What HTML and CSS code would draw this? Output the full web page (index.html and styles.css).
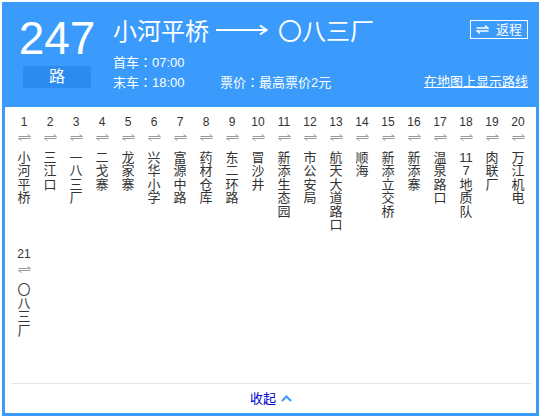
FILE: index.html
```html
<!DOCTYPE html>
<html>
<head>
<meta charset="utf-8">
<link rel="stylesheet" href="styles.css">
</head>
<body>
<div class="card">
  <div class="header">
    <div class="line-no">
      <div class="num">247</div>
      <div class="lu">路</div>
    </div>
    <div class="info">
      <div class="title-row">
        <div class="title">
          <span>小河平桥</span>
          <svg class="long-arrow" width="52" height="12" viewBox="0 0 52 12"><path d="M0 6H50M44 1.5L50.5 6L44 10.5" fill="none" stroke="#fff" stroke-width="2"/></svg>
          <span>〇八三厂</span>
        </div>
        <div class="return"><svg class="ret-icon" width="13" height="9" viewBox="0 0 13 9"><path d="M0.5 3H12L9 0.5M12.5 6H1L4 8.5" fill="none" stroke="#fff" stroke-width="1.3"/></svg><span>返程</span></div>
      </div>
      <div class="time">首车<span class="colon">：</span>07:00</div>
      <div class="time-row">
        <span class="t-last">末车<span class="colon">：</span>18:00</span>
        <span>票价<span class="colon">：</span>最高票价2元</span>
        <a class="maplink">在地图上显示路线</a>
      </div>
    </div>
  </div>
  <div class="stations">
    <div class="st"><div class="no">1</div><svg class="sw" width="13" height="7" viewBox="0 0 13 7"><path d="M0.5 2.5H12.5L9.5 0.5M12.5 4.5H0.5L3.5 6.5" fill="none" stroke="#999" stroke-width="1"/></svg><div class="name">小河平桥</div></div>
    <div class="st"><div class="no">2</div><svg class="sw" width="13" height="7" viewBox="0 0 13 7"><path d="M0.5 2.5H12.5L9.5 0.5M12.5 4.5H0.5L3.5 6.5" fill="none" stroke="#999" stroke-width="1"/></svg><div class="name">三江口</div></div>
    <div class="st"><div class="no">3</div><svg class="sw" width="13" height="7" viewBox="0 0 13 7"><path d="M0.5 2.5H12.5L9.5 0.5M12.5 4.5H0.5L3.5 6.5" fill="none" stroke="#999" stroke-width="1"/></svg><div class="name">一八三厂</div></div>
    <div class="st"><div class="no">4</div><svg class="sw" width="13" height="7" viewBox="0 0 13 7"><path d="M0.5 2.5H12.5L9.5 0.5M12.5 4.5H0.5L3.5 6.5" fill="none" stroke="#999" stroke-width="1"/></svg><div class="name">二戈寨</div></div>
    <div class="st"><div class="no">5</div><svg class="sw" width="13" height="7" viewBox="0 0 13 7"><path d="M0.5 2.5H12.5L9.5 0.5M12.5 4.5H0.5L3.5 6.5" fill="none" stroke="#999" stroke-width="1"/></svg><div class="name">龙家寨</div></div>
    <div class="st"><div class="no">6</div><svg class="sw" width="13" height="7" viewBox="0 0 13 7"><path d="M0.5 2.5H12.5L9.5 0.5M12.5 4.5H0.5L3.5 6.5" fill="none" stroke="#999" stroke-width="1"/></svg><div class="name">兴华小学</div></div>
    <div class="st"><div class="no">7</div><svg class="sw" width="13" height="7" viewBox="0 0 13 7"><path d="M0.5 2.5H12.5L9.5 0.5M12.5 4.5H0.5L3.5 6.5" fill="none" stroke="#999" stroke-width="1"/></svg><div class="name">富源中路</div></div>
    <div class="st"><div class="no">8</div><svg class="sw" width="13" height="7" viewBox="0 0 13 7"><path d="M0.5 2.5H12.5L9.5 0.5M12.5 4.5H0.5L3.5 6.5" fill="none" stroke="#999" stroke-width="1"/></svg><div class="name">药材仓库</div></div>
    <div class="st"><div class="no">9</div><svg class="sw" width="13" height="7" viewBox="0 0 13 7"><path d="M0.5 2.5H12.5L9.5 0.5M12.5 4.5H0.5L3.5 6.5" fill="none" stroke="#999" stroke-width="1"/></svg><div class="name">东二环路</div></div>
    <div class="st"><div class="no">10</div><svg class="sw" width="13" height="7" viewBox="0 0 13 7"><path d="M0.5 2.5H12.5L9.5 0.5M12.5 4.5H0.5L3.5 6.5" fill="none" stroke="#999" stroke-width="1"/></svg><div class="name">冒沙井</div></div>
    <div class="st"><div class="no">11</div><svg class="sw" width="13" height="7" viewBox="0 0 13 7"><path d="M0.5 2.5H12.5L9.5 0.5M12.5 4.5H0.5L3.5 6.5" fill="none" stroke="#999" stroke-width="1"/></svg><div class="name">新添生态园</div></div>
    <div class="st"><div class="no">12</div><svg class="sw" width="13" height="7" viewBox="0 0 13 7"><path d="M0.5 2.5H12.5L9.5 0.5M12.5 4.5H0.5L3.5 6.5" fill="none" stroke="#999" stroke-width="1"/></svg><div class="name">市公安局</div></div>
    <div class="st"><div class="no">13</div><svg class="sw" width="13" height="7" viewBox="0 0 13 7"><path d="M0.5 2.5H12.5L9.5 0.5M12.5 4.5H0.5L3.5 6.5" fill="none" stroke="#999" stroke-width="1"/></svg><div class="name">航天大道路口</div></div>
    <div class="st"><div class="no">14</div><svg class="sw" width="13" height="7" viewBox="0 0 13 7"><path d="M0.5 2.5H12.5L9.5 0.5M12.5 4.5H0.5L3.5 6.5" fill="none" stroke="#999" stroke-width="1"/></svg><div class="name">顺海</div></div>
    <div class="st"><div class="no">15</div><svg class="sw" width="13" height="7" viewBox="0 0 13 7"><path d="M0.5 2.5H12.5L9.5 0.5M12.5 4.5H0.5L3.5 6.5" fill="none" stroke="#999" stroke-width="1"/></svg><div class="name">新添立交桥</div></div>
    <div class="st"><div class="no">16</div><svg class="sw" width="13" height="7" viewBox="0 0 13 7"><path d="M0.5 2.5H12.5L9.5 0.5M12.5 4.5H0.5L3.5 6.5" fill="none" stroke="#999" stroke-width="1"/></svg><div class="name">新添寨</div></div>
    <div class="st"><div class="no">17</div><svg class="sw" width="13" height="7" viewBox="0 0 13 7"><path d="M0.5 2.5H12.5L9.5 0.5M12.5 4.5H0.5L3.5 6.5" fill="none" stroke="#999" stroke-width="1"/></svg><div class="name">温泉路口</div></div>
    <div class="st"><div class="no">18</div><svg class="sw" width="13" height="7" viewBox="0 0 13 7"><path d="M0.5 2.5H12.5L9.5 0.5M12.5 4.5H0.5L3.5 6.5" fill="none" stroke="#999" stroke-width="1"/></svg><div class="name">117地质队</div></div>
    <div class="st"><div class="no">19</div><svg class="sw" width="13" height="7" viewBox="0 0 13 7"><path d="M0.5 2.5H12.5L9.5 0.5M12.5 4.5H0.5L3.5 6.5" fill="none" stroke="#999" stroke-width="1"/></svg><div class="name">肉联厂</div></div>
    <div class="st"><div class="no">20</div><svg class="sw" width="13" height="7" viewBox="0 0 13 7"><path d="M0.5 2.5H12.5L9.5 0.5M12.5 4.5H0.5L3.5 6.5" fill="none" stroke="#999" stroke-width="1"/></svg><div class="name">万江机电</div></div>
    <div class="st"><div class="no">21</div><svg class="sw" width="13" height="7" viewBox="0 0 13 7"><path d="M0.5 2.5H12.5L9.5 0.5M12.5 4.5H0.5L3.5 6.5" fill="none" stroke="#999" stroke-width="1"/></svg><div class="name">〇八三厂</div></div>
  </div>
  <div class="footer">
    <span class="fold">收起</span>
    <svg class="chev" width="11" height="7" viewBox="0 0 11 7"><path d="M1 6L5.5 1.5L10 6" fill="none" stroke="#3a9bfc" stroke-width="2"/></svg>
  </div>
</div>
</body>
</html>
```
FILE: styles.css
```css
* { box-sizing: border-box; }
html, body { margin: 0; padding: 0; background: #fff; }
body {
  padding: 2px;
  font-family: "Liberation Sans", "Noto Sans CJK SC", sans-serif;
}
.card {
  width: 537px;
  height: 414px;
  border: 3px solid #3a9bfc;
  border-top: 0;
  display: flex;
  flex-direction: column;
}
.header {
  height: 105px;
  background: #3a9bfc;
  color: #fff;
  display: flex;
  align-items: flex-start;
  padding-left: 18px;
}
.line-no {
  width: 68px;
  padding-top: 13px;
  display: flex;
  flex-direction: column;
  align-items: center;
}
.num {
  font-size: 46px;
  line-height: 46px;
  height: 46px;
}
.lu {
  margin-top: 5px;
  width: 68px;
  height: 22px;
  background: #2b8bef;
  font-size: 16px;
  line-height: 22px;
  text-align: center;
}
.info {
  flex: 1;
  margin-left: 22px;
  padding-right: 8px;
  padding-top: 16px;
  font-size: 13px;
}
.title-row {
  display: flex;
  justify-content: space-between;
  align-items: flex-start;
  height: 34px;
}
.title {
  display: flex;
  align-items: center;
  font-size: 24px;
  line-height: 28px;
  height: 28px;
}
.long-arrow {
  display: block;
  margin: 0 10px 4px 7px;
}
.return {
  margin-top: 2px;
  width: 58px;
  height: 19px;
  border: 1px solid #fff;
  display: flex;
  align-items: center;
  padding-left: 5px;
  font-size: 13px;
  line-height: 17px;
}
.ret-icon { display: block; margin-right: 7px; }
.time, .time-row {
  line-height: 20px;
  height: 20px;
}
.colon { font-family: "Noto Sans CJK TC", sans-serif; }
.time-row { display: flex; }
.t-last { width: 107px; }
.maplink {
  margin-left: auto;
  color: #fff;
  text-decoration: underline;
}
.stations {
  flex: 1;
  display: flex;
  flex-wrap: wrap;
  align-content: flex-start;
  row-gap: 16px;
  padding: 8px 5px 0 6px;
}
.st {
  width: 26px;
  display: flex;
  flex-direction: column;
  align-items: center;
  color: #333;
}
.no {
  font-size: 12px;
  line-height: 14px;
  height: 14px;
}
.sw { display: block; margin-top: 5px; }
.name {
  margin-top: 10px;
  width: 15px;
  font-size: 13px;
  line-height: 13.4px;
  text-align: center;
  word-break: break-all;
}
.footer {
  margin: 0 5px 0 6px;
  height: 30px;
  border-top: 1px solid #e6e6e6;
  display: flex;
  align-items: center;
  justify-content: center;
  font-size: 13px;
}
.fold { color: #0000cc; line-height: 29px; }
.chev { display: block; margin-left: 5px; }
```
